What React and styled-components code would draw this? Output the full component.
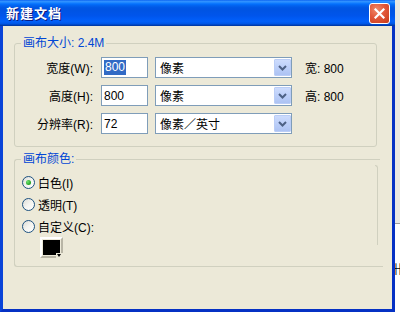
import React from "react";
import styled, { createGlobalStyle } from "styled-components";

const Global = createGlobalStyle`
  html, body { margin: 0; padding: 0; background: #ffffff; }
  body { width: 400px; height: 312px; overflow: hidden; font-family: "Liberation Sans", "Noto Sans CJK SC", sans-serif; }
  * { box-sizing: border-box; }
`;

const Screen = styled.div`
  display: flex;
  width: 400px;
  height: 312px;
`;

const Window = styled.div`
  display: flex;
  flex-direction: column;
  width: 395px;
  height: 312px;
`;

const TitleBar = styled.div`
  display: flex;
  align-items: center;
  justify-content: space-between;
  height: 26px;
  padding: 0 5px 1px 6px;
  background: linear-gradient(
    to bottom,
    #0058ee 0%,
    #3593ff 4%,
    #288eff 8%,
    #127dff 12%,
    #036ffc 16%,
    #0262ee 22%,
    #0057e5 30%,
    #0054e3 40%,
    #0055eb 60%,
    #005bf5 72%,
    #0260f8 82%,
    #0058ea 90%,
    #0047c5 95%,
    #003399 100%
  );
`;

const Title = styled.span`
  color: #ffffff;
  font-family: "Noto Sans CJK SC", sans-serif;
  font-weight: 700;
  font-size: 13px;
  letter-spacing: 1px;
  line-height: 16px;
  text-shadow: 1px 1px 0 #0a1a80;
`;

const CloseButton = styled.div`
  display: flex;
  align-items: center;
  justify-content: center;
  width: 21px;
  height: 21px;
  margin-top: 1px;
  border: 1px solid #ffffff;
  border-radius: 3px;
  background: radial-gradient(circle at 35% 30%, #f08a6a 0%, #e2583a 45%, #c73a18 100%);
`;

const Body = styled.div`
  flex: 1;
  display: flex;
  flex-direction: column;
  background: #ece9d8;
  border-left: 3px solid #0a44d8;
  border-right: 3px solid #0531c4;
  border-bottom: 3px solid #0531c4;
`;

const Group = styled.fieldset`
  position: relative;
  margin: ${(p) => p.$top}px 0 0 11px;
  width: 363px;
  padding: ${(p) => p.$pad};
  border: 1px solid #d0d0bf;
  border-radius: 3px;
  min-width: 0;
`;

const Group2 = styled(Group)`
  width: 366px;
  border-right: none;
  border-bottom: none;
  border-top-right-radius: 0;
  &::before {
    content: "";
    position: absolute;
    top: -1px;
    right: 2px;
    width: 2px;
    height: 79px;
    border-top: 1px solid #d0d0bf;
    border-right: 1px solid #d0d0bf;
    border-top-right-radius: 3px;
  }
  &::after {
    content: "";
    position: absolute;
    left: -1px;
    bottom: -1px;
    width: 4px;
    height: 4px;
    border-left: 1px solid #d0d0bf;
    border-bottom: 1px solid #d0d0bf;
    border-bottom-left-radius: 3px;
  }
`;

const BottomLine = styled.div`
  width: 366px;
  height: 1px;
  margin-left: 14px;
  background: #d0d0bf;
`;

const Legend = styled.legend`
  padding: 0 2px;
  margin-left: 6px;
  color: #0046d5;
  font-size: 12px;
  line-height: 14px;
`;

const Rows = styled.div`
  display: flex;
  flex-direction: column;
  gap: 7px;
`;

const Row = styled.div`
  display: flex;
  align-items: center;
  height: 21px;
`;

const Label = styled.span`
  width: 78px;
  text-align: right;
  font-size: 12px;
  color: #000000;
  white-space: nowrap;
`;

const Input = styled.div`
  display: flex;
  align-items: center;
  width: 47px;
  height: 21px;
  margin-left: 8px;
  padding-left: 2px;
  border: 1px solid #7f9db9;
  background: #ffffff;
  font-size: 12px;
  color: #000000;
`;

const Selected = styled.span`
  padding: 1px 1px;
  background: #316ac5;
  color: #ffffff;
  line-height: 13px;
`;

const Select = styled.div`
  display: flex;
  align-items: center;
  justify-content: space-between;
  width: 137px;
  height: 21px;
  margin-left: 7px;
  padding: 1px 0 1px 4px;
  border: 1px solid #7f9db9;
  background: #ffffff;
  font-size: 12px;
  color: #000000;
`;

const Arrow = styled.div`
  display: flex;
  align-items: center;
  justify-content: center;
  width: 17px;
  height: 17px;
  border: 1px solid #bacdf6;
  border-radius: 1px;
  background: linear-gradient(to bottom, #cddcfd 0%, #bccff9 50%, #adc3f3 100%);
`;

const Info = styled.span`
  margin-left: 13px;
  font-size: 12px;
  color: #000000;
`;

const RadioList = styled.div`
  display: flex;
  flex-direction: column;
  padding-left: 7px;
`;

const RadioRow = styled.div`
  display: flex;
  align-items: center;
  height: 22px;
  gap: 3px;
  font-size: 12px;
  color: #000000;
`;

const RadioDot = styled.span`
  display: flex;
  align-items: center;
  justify-content: center;
  width: 13px;
  height: 13px;
  border-radius: 50%;
  border: 1px solid #1c5180;
  background: linear-gradient(135deg, #dcdcd6 0%, #f4f4f0 50%, #ffffff 100%);
  &::after {
    content: "";
    display: ${(p) => (p.$checked ? "block" : "none")};
    width: 5px;
    height: 5px;
    border-radius: 50%;
    background: radial-gradient(circle at 35% 35%, #71e371 0%, #21a121 70%, #1a8a1a 100%);
  }
`;

const Swatch = styled.div`
  position: relative;
  width: 23px;
  height: 21px;
  margin-left: 25px;
  border: 2px solid #ffffff;
  border-right-color: #b8b5a5;
  border-bottom-color: #b8b5a5;
  background: #000000;
  box-shadow: inset 0 0 0 1px #ece9d8;
`;

const SwatchArrow = styled.span`
  position: absolute;
  right: -2px;
  bottom: -2px;
  width: 7px;
  height: 5px;
  background: #ece9d8;
  &::after {
    content: "";
    position: absolute;
    left: 1px;
    top: 1px;
    border-left: 2.5px solid transparent;
    border-right: 2.5px solid transparent;
    border-top: 3px solid #000000;
  }
`;

const Strip = styled.div`
  display: flex;
  flex-direction: column;
  width: 5px;
  height: 312px;
  overflow: hidden;
`;

const StripTop = styled.div`
  height: 224px;
  background: #e9e8e2;
  border-bottom: 1px solid #9d9d9d;
`;

const StripBottom = styled.div`
  flex: 1;
  background: #ffffff;
  padding-top: 39px;
  font-family: "Noto Sans CJK SC", sans-serif;
  font-size: 12px;
  line-height: 12px;
  white-space: nowrap;
  margin-left: -3px;
`;

const Chevron = () => (
  <svg width="9" height="6" viewBox="0 0 9 6">
    <path d="M1 1 L4.5 4.5 L8 1" fill="none" stroke="#4d6185" strokeWidth="2" />
  </svg>
);

const CloseX = () => (
  <svg width="11" height="11" viewBox="0 0 11 11">
    <path d="M1.5 1.5 L9.5 9.5 M9.5 1.5 L1.5 9.5" stroke="#ffffff" strokeWidth="2.2" strokeLinecap="square" />
  </svg>
);

const sizeRows = [
  { label: "宽度(W):", value: "800", selected: true, unit: "像素", info: "宽: 800" },
  { label: "高度(H):", value: "800", unit: "像素", info: "高: 800" },
  { label: "分辨率(R):", value: "72", unit: "像素／英寸" },
];

const colorOptions = [
  { label: "白色(I)", checked: true },
  { label: "透明(T)" },
  { label: "自定义(C):" },
];

export default function App() {
  return (
    <>
      <Global />
      <Screen>
        <Window>
          <TitleBar>
            <Title>新建文档</Title>
            <CloseButton>
              <CloseX />
            </CloseButton>
          </TitleBar>
          <Body>
            <Group $top={10} $pad="7px 0 12px 0">
              <Legend>画布大小: 2.4M</Legend>
              <Rows>
                {sizeRows.map((r) => (
                  <Row key={r.label}>
                    <Label>{r.label}</Label>
                    <Input>{r.selected ? <Selected>{r.value}</Selected> : r.value}</Input>
                    <Select>
                      <span>{r.unit}</span>
                      <Arrow>
                        <Chevron />
                      </Arrow>
                    </Select>
                    {r.info && <Info>{r.info}</Info>}
                  </Row>
                ))}
              </Rows>
            </Group>
            <Group2 $top={5} $pad="5px 0 8px 0">
              <Legend>画布颜色:</Legend>
              <RadioList>
                {colorOptions.map((o) => (
                  <RadioRow key={o.label}>
                    <RadioDot $checked={o.checked} />
                    <span>{o.label}</span>
                  </RadioRow>
                ))}
              </RadioList>
              <Swatch>
                <SwatchArrow />
              </Swatch>
            </Group2>
            <BottomLine />
          </Body>
        </Window>
        <Strip>
          <StripTop />
          <StripBottom>卄</StripBottom>
        </Strip>
      </Screen>
    </>
  );
}
